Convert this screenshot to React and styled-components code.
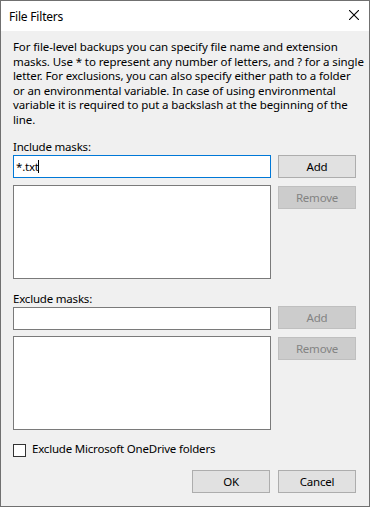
import React from "react";
import styled, { createGlobalStyle } from "styled-components";

const Global = createGlobalStyle`
  html, body { margin: 0; padding: 0; background: #f0f0f0; }
  * { box-sizing: border-box; }
  body { font-family: "Noto Sans", "Open Sans", sans-serif; font-size: 11.5px; letter-spacing: -0.2px; color: #000; }
`;

const Window = styled.div`
  width: 370px;
  height: 507px;
  border: 1px solid #707070;
  background: #f0f0f0;
  display: flex;
  flex-direction: column;
`;

const TitleBar = styled.div`
  height: 30px;
  background: #fff;
  display: flex;
  align-items: center;
  justify-content: space-between;
  padding: 1px 10px 0 8px;
  flex: none;
`;

const Title = styled.span`
  font-size: 12px;
`;

const CloseButton = styled.div`
  width: 10px;
  height: 10px;
  display: flex;
  margin-top: -3px;
`;

const Content = styled.div`
  flex: 1;
  padding: 9px 13px 0 12px;
  display: flex;
  flex-direction: column;
`;

const Description = styled.p`
  margin: 0;
  line-height: 14.5px;
  letter-spacing: -0.1px;
  white-space: nowrap;
`;

const Label = styled.div`
  line-height: 16px;
  margin-top: 12px;
`;

const Grid = styled.div`
  display: grid;
  grid-template-columns: 258px 78px;
  column-gap: 7px;
  row-gap: ${(p) => p.$rowGap}px;
  align-items: start;
`;

const Field = styled.div`
  height: 23px;
  background: #fff;
  border: 1px solid ${(p) => (p.$focused ? "#0078d7" : "#7a7a7a")};
  display: flex;
  align-items: center;
  padding: 0 2px;
  line-height: 15px;
`;

const Caret = styled.span`
  display: inline-block;
  width: 1px;
  height: 13px;
  background: #000;
  margin-left: -1px;
`;

const ListBox = styled.div`
  height: 94px;
  background: #fff;
  border: 1px solid #7a7a7a;
`;

const Button = styled.button`
  width: 78px;
  height: 23px;
  padding: 0;
  margin: 0;
  font: inherit;
  letter-spacing: inherit;
  background: ${(p) => (p.disabled ? "#cccccc" : "#e1e1e1")};
  border: 1px solid ${(p) => (p.disabled ? "#bfbfbf" : "#adadad")};
  color: ${(p) => (p.disabled ? "#838383" : "#000")};
  margin-top: ${(p) => p.$offset || 0}px;
`;

const CheckRow = styled.label`
  display: flex;
  align-items: flex-start;
  gap: 6px;
  margin-top: 14px;
  height: 13px;
`;

const CheckBox = styled.span`
  width: 13px;
  height: 13px;
  border: 1px solid #333;
  background: #fff;
  flex: none;
`;

const CheckText = styled.span`
  line-height: 13px;
  margin-top: -2px;
`;

const Footer = styled.div`
  display: flex;
  justify-content: flex-end;
  gap: 8px;
  margin-top: 13px;
`;

export default function App() {
  return (
    <>
      <Global />
      <Window>
        <TitleBar>
          <Title>File Filters</Title>
          <CloseButton>
            <svg width="10" height="10" viewBox="0 0 10 10">
              <path d="M0 0 L10 10 M10 0 L0 10" stroke="#000" strokeWidth="1.1" />
            </svg>
          </CloseButton>
        </TitleBar>
        <Content>
          <Description>
            For file-level backups you can specify file name and extension
            <br />
            masks. Use * to represent any number of letters, and ? for a single
            <br />
            letter. For exclusions, you can also specify either path to a folder
            <br />
            or an environmental variable. In case of using environmental
            <br />
            variable it is required to put a backslash at the beginning of the
            <br />
            line.
          </Description>

          <Label>Include masks:</Label>
          <Grid $rowGap={7}>
            <Field $focused>
              *.txt<Caret />
            </Field>
            <Button>Add</Button>
            <ListBox />
            <Button disabled $offset={1}>Remove</Button>
          </Grid>

          <Label>Exclude masks:</Label>
          <Grid $rowGap={6}>
            <Field />
            <Button disabled $offset={-1}>Add</Button>
            <ListBox />
            <Button disabled $offset={1}>Remove</Button>
          </Grid>

          <CheckRow>
            <CheckBox />
            <CheckText>Exclude Microsoft OneDrive folders</CheckText>
          </CheckRow>

          <Footer>
            <Button>OK</Button>
            <Button>Cancel</Button>
          </Footer>
        </Content>
      </Window>
    </>
  );
}
